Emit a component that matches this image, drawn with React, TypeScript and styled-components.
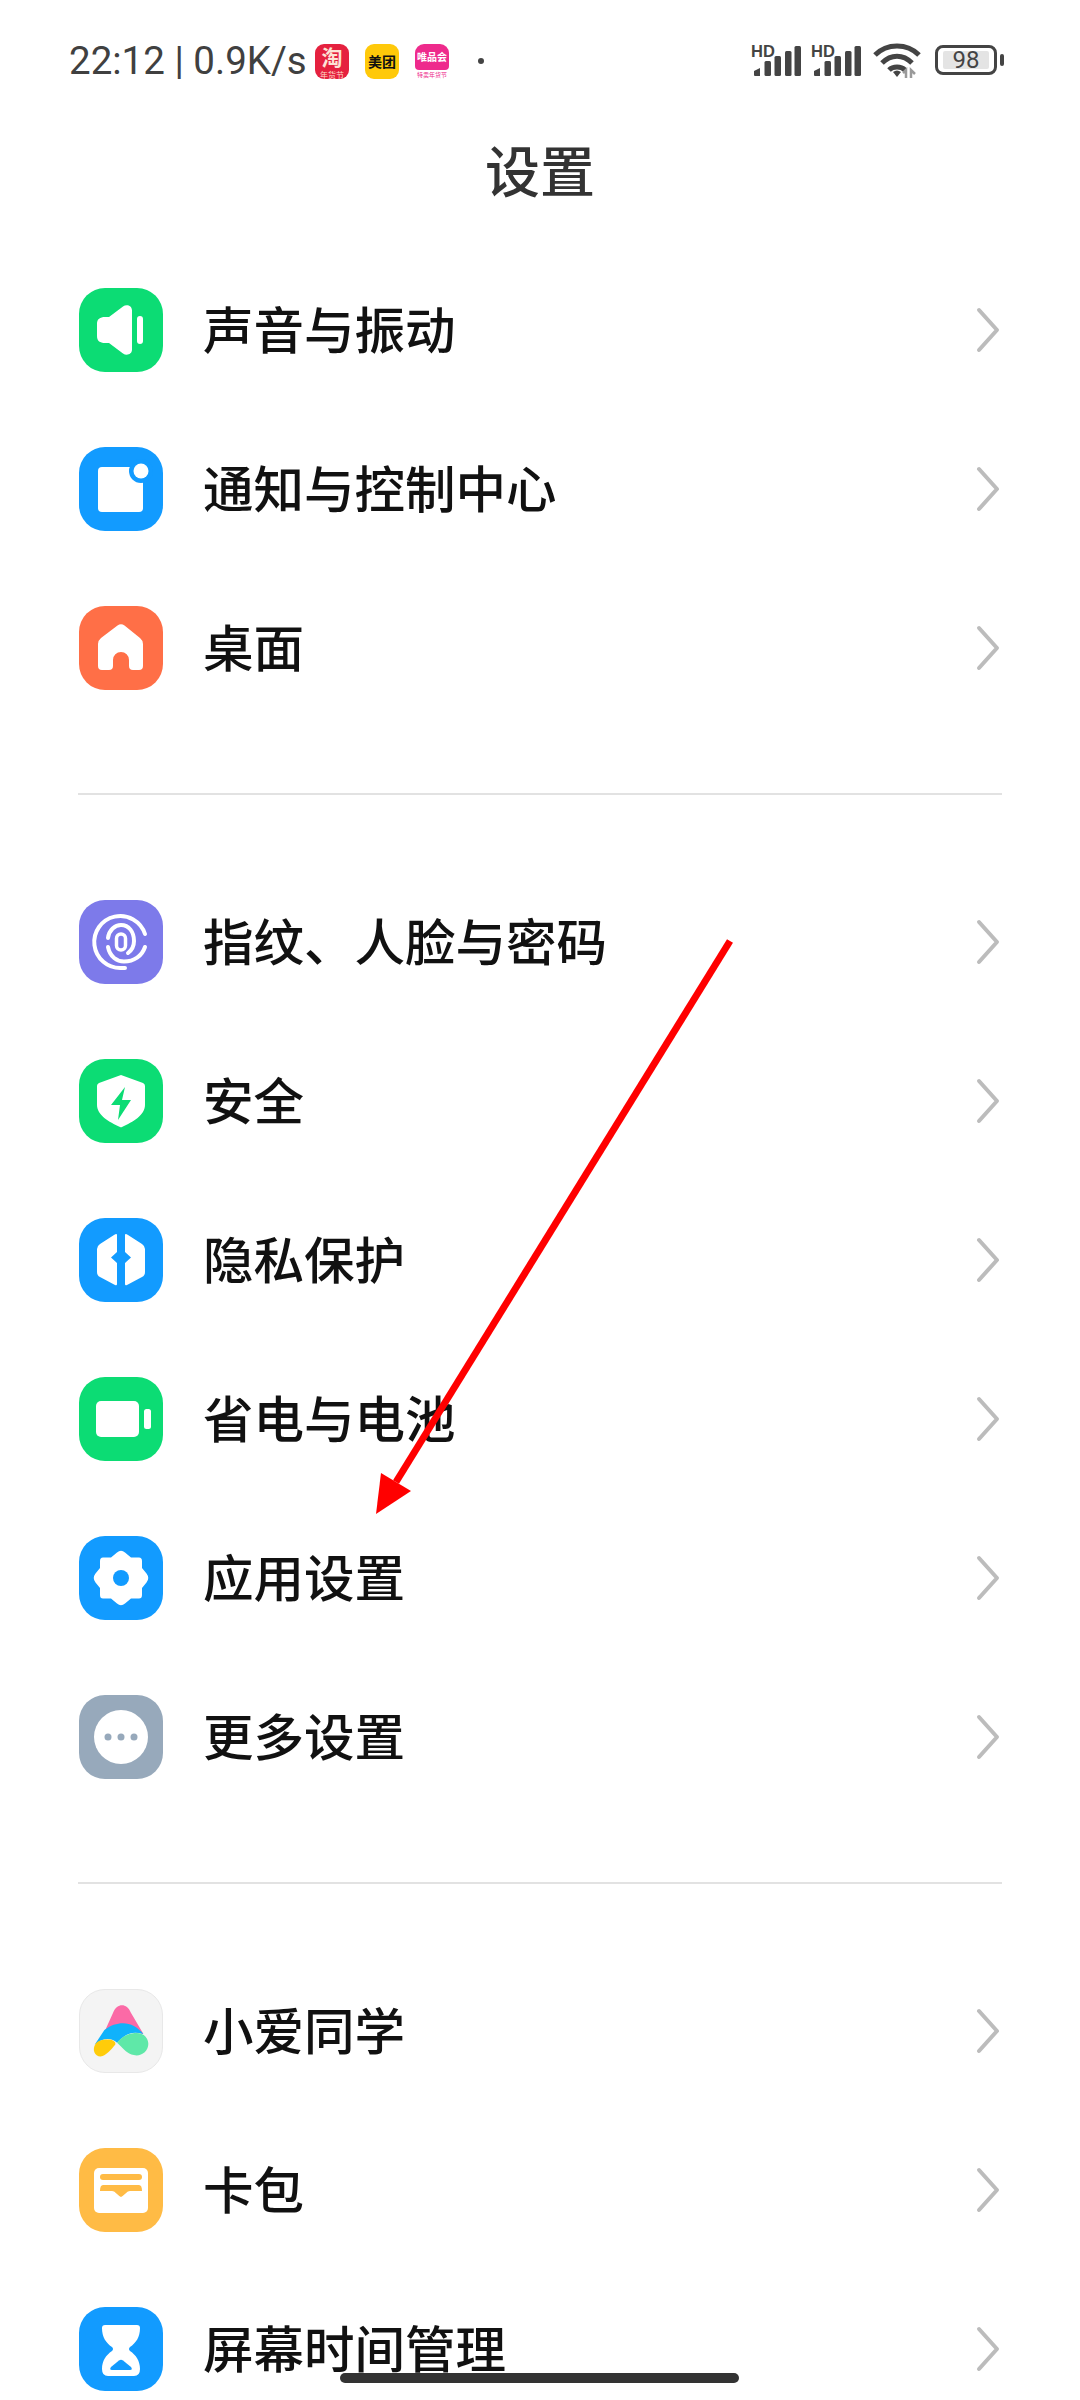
import React from 'react';
import styled, { createGlobalStyle } from 'styled-components';

const FONT = `"Noto Sans CJK SC", "Noto Sans", sans-serif`;

const GlobalStyle = createGlobalStyle`
  html, body { margin: 0; padding: 0; background: #fff; }
  body { font-family: ${FONT}; }
`;

const Page = styled.div`
  position: relative;
  width: 1080px;
  height: 2400px;
  overflow: hidden;
  background: #fff;
`;

const StatusBar = styled.div`
  height: 120px;
  padding: 42px 76px 0 69px;
  box-sizing: border-box;
  display: flex;
  align-items: flex-start;
  justify-content: space-between;
`;

const StatusLeft = styled.div`
  display: flex;
  align-items: center;
  height: 38px;
`;

const StatusText = styled.span`
  font-family: "Roboto", "Noto Sans", sans-serif;
  font-size: 38.5px;
  line-height: 38px;
  color: #404040;
  width: 246px;
  white-space: nowrap;
`;

const AppIcons = styled.div`
  display: flex;
  gap: 16px;
`;

const AppIcon = styled.div<{ $bg: string }>`
  width: 34px;
  height: 35px;
  border-radius: 9px;
  background: ${(p) => p.$bg};
  display: flex;
  flex-direction: column;
  align-items: center;
  justify-content: center;
  line-height: 1;
`;

const AppMain = styled.div<{ $size: number; $color: string; $bg?: string }>`
  width: 100%;
  flex: 1;
  min-height: 0;
  border-radius: 9px 9px 4px 4px;
  display: flex;
  align-items: center;
  justify-content: center;
  font-size: ${(p) => p.$size}px;
  line-height: 1;
  font-weight: 700;
  white-space: nowrap;
  color: ${(p) => p.$color};
  background: ${(p) => p.$bg || 'transparent'};
`;

const AppSub = styled.div<{ $color: string; $size: number }>`
  height: 9px;
  flex: none;
  font-size: ${(p) => p.$size}px;
  line-height: 9px;
  white-space: nowrap;
  color: ${(p) => p.$color};
`;

const Dot = styled.span`
  width: 6px;
  height: 6px;
  margin-left: 29px;
  border-radius: 50%;
  background: #444;
`;

const StatusRight = styled.div`
  display: flex;
  align-items: center;
  height: 36px;
`;

const Signal = styled.svg`
  width: 50px;
  height: 36px;
  margin: -3px 10px 0 0;
`;

const Wifi = styled.svg`
  width: 48px;
  height: 36px;
  margin: 0 14px 0 2px;
`;

const Battery = styled.div`
  position: relative;
  width: 62px;
  height: 30px;
  box-sizing: border-box;
  border: 3px solid #444;
  border-radius: 8px;
  padding: 3px 5px;
  margin-right: 7px;
  &::after {
    content: '';
    position: absolute;
    right: -10px;
    top: 6px;
    width: 4px;
    height: 12px;
    border-radius: 2px;
    background: #444;
  }
`;

const BatteryFill = styled.div`
  height: 18px;
  background: #e4e4e4;
  border-radius: 2px;
  font-family: "Roboto", sans-serif;
  font-size: 24px;
  line-height: 18px;
  text-align: center;
  color: #444;
`;

const Title = styled.h1`
  margin: 0;
  height: 130px;
  font-size: 55px;
  line-height: 96px;
  font-weight: 500;
  text-align: center;
  color: #333;
`;

const Group = styled.div`
  display: flex;
  flex-direction: column;
`;

const Row = styled.div`
  height: 159px;
  padding: 0 78px 0 79px;
  display: flex;
  align-items: center;
`;

const IconBox = styled.div<{ $bg: string; $border?: boolean }>`
  width: 84px;
  height: 84px;
  flex: none;
  border-radius: 26px;
  box-sizing: border-box;
  background: ${(p) => p.$bg};
  border: ${(p) => (p.$border ? '1px solid #e8e8e8' : 'none')};
  overflow: hidden;
  svg { display: block; width: 100%; height: 100%; }
`;

const Label = styled.span`
  flex: 1;
  margin-left: 40px;
  padding-bottom: 5px;
  font-size: 50.5px;
  line-height: 60px;
  font-weight: 500;
  color: #111;
`;

const Chevron = styled.svg`
  width: 26px;
  height: 46px;
  flex: none;
`;

const Divider = styled.div`
  height: 2px;
  margin: 66px 78px 67px;
  background: #e2e2e2;
`;

const HomeBar = styled.div`
  position: absolute;
  left: 340px;
  top: 2373px;
  width: 399px;
  height: 10px;
  border-radius: 5px;
  background: #333;
`;

const Arrow = styled.svg`
  position: absolute;
  left: 0;
  top: 0;
  width: 1080px;
  height: 2400px;
  pointer-events: none;
`;

const BLUE = '#129bff';
const GREEN = '#0cdc74';

const SpeakerIcon = () => (
  <svg viewBox="0 0 84 84">
    <path fill="#fff" d="M26 29h4L44 18.500c3.500-2.500 9-1 9 4v39c0 5-5.500 6.500-9 4L30 55h-4c-5 0-8-2-8-7V36c0-5 3-7 8-7Z" />
    <rect x="58" y="28" width="6" height="28" rx="3" fill="#fff" />
  </svg>
);

const NoticeIcon = () => (
  <svg viewBox="0 0 84 84">
    <rect x="19" y="20" width="45" height="45" rx="4" fill="#fff" />
    <circle cx="62" cy="24" r="12" fill={BLUE} />
    <circle cx="62" cy="24" r="7.500" fill="#fff" />
  </svg>
);

const HomeIcon = () => (
  <svg viewBox="0 0 84 84">
    <path fill="#fff" d="M38.500 19.500Q42 17 45.500 19.500L61 32Q64 34.500 64 38V60Q64 64 60 64H54Q50 64 50 60V54A8 8 0 0 0 34 54V60Q34 64 30 64H23Q19 64 19 60V38Q19 34.500 22 32Z" />
  </svg>
);

const FingerprintIcon = () => (
  <svg viewBox="0 0 84 84" fill="none" stroke="#fff" strokeWidth="4" strokeLinecap="round">
    <path d="M66 34A26 26 0 1 0 42 68H46" />
    <path d="M29 47C31 57 38 61.500 45 61.500C55 61.500 63 56 66 47" />
    <path d="M29 38C30 30 36 25 42 25C50 25 55 32 55 41C55 46 53 50 49 53" />
    <rect x="37.500" y="34" width="9" height="16" rx="4.500" strokeWidth="3.500" />
  </svg>
);

const ShieldIcon = () => (
  <svg viewBox="0 0 84 84">
    <path fill="#fff" d="M42 16L64 24Q66 25 66 27V46C66 56 54 63 43 68Q42 68.500 41 68C30 63 18 56 18 46V27Q18 25 20 24Z" />
    <path fill={GREEN} d="M46 28L32 46H41L39 61L52 41H43Z" />
  </svg>
);

const PrivacyIcon = () => (
  <svg viewBox="0 0 84 84">
    <path fill="#fff" d="M38 17V34L32 39.500L38 45V66Q38 68 36 67L21 59Q18 57.500 18 54V31Q18 28 21 26L35 17Q38 15 38 17Z" />
    <path fill="#fff" d="M46 17V34L52 39.500L46 45V66Q46 68 48 67L63 59Q66 57.500 66 54V31Q66 28 63 26L49 17Q46 15 46 17Z" />
  </svg>
);

const BatteryIcon = () => (
  <svg viewBox="0 0 84 84">
    <rect x="17" y="24" width="43" height="36" rx="5" fill="#fff" />
    <rect x="65" y="32" width="7" height="20" rx="2.500" fill="#fff" />
  </svg>
);

const GearIcon = () => (
  <svg viewBox="0 0 84 84">
    <path fill="#fff" d="M38 16.500Q42 13 46 16.500L52 21.500H60Q63 21.500 63 25V32L67.500 37.500Q71 42 67.500 46.500L63 52V59Q63 62.500 60 62.500H52L46 67.500Q42 71 38 67.500L32 62.500H24Q21 62.500 21 59V52L16.500 46.500Q13 42 16.500 37.500L21 32V25Q21 21.500 24 21.500H32Z" />
    <circle cx="42" cy="42" r="8" fill={BLUE} />
  </svg>
);

const MoreIcon = () => (
  <svg viewBox="0 0 84 84">
    <circle cx="42" cy="42" r="27" fill="#fff" />
    <circle cx="29" cy="42" r="3.500" fill="#97a9bb" />
    <circle cx="42" cy="42" r="3.500" fill="#97a9bb" />
    <circle cx="55" cy="42" r="3.500" fill="#97a9bb" />
  </svg>
);

const AssistantIcon = () => (
  <svg viewBox="0 0 84 84">
    <path fill="#fb6aa6" d="M34 23C38 13 48 13 52 23L65 45L44 40L25 43Z" />
    <path fill="#10b2fb" d="M25 41C31 36 38 34 44 34C52 34 59 38 65 45C55 42 47 44 38 54C33 49 24 48 15 56Z" />
    <path fill="#5fe8a8" d="M38 54C44 46 52 44 58 44C66 44 70 50 70 55C70 62 64 67 58 67C50 67 46 62 42 58Z" />
    <path fill="#ffcc0a" d="M16 55C19 51 26 50 32 51C35 52 37 54 36 56C32 61 27 67 21 68C15 68 12 61 16 55Z" />
  </svg>
);

const WalletIcon = () => (
  <svg viewBox="0 0 84 84">
    <rect x="15" y="20" width="54" height="45" rx="5" fill="#fff" />
    <rect x="21" y="26" width="42" height="6" rx="3" fill="#ffbb45" />
    <path fill="#ffbb45" d="M24 37H60Q63 37 63 43H51C48 43 47 46 42 49C37 46 36 43 33 43H21Q21 37 24 37Z" />
  </svg>
);

const HourglassIcon = () => (
  <svg viewBox="0 0 84 84">
    <path fill="#fff" d="M26 18H58Q61 18 61 21C61 30 57 36 51 40Q49 42 51 44C57 48 61 54 61 62Q61 69 55 69H29Q23 69 23 62C23 54 27 48 33 44Q35 42 33 40C27 36 23 30 23 21Q23 18 26 18Z" />
    <path fill={BLUE} d="M40 53.500Q42 52 44 53.500L52 60Q54 63 51 63H33Q30 63 32 60Z" />
  </svg>
);

const rows1 = [
  { label: '声音与振动', bg: GREEN, icon: <SpeakerIcon /> },
  { label: '通知与控制中心', bg: BLUE, icon: <NoticeIcon /> },
  { label: '桌面', bg: '#ff6f47', icon: <HomeIcon /> },
];

const rows2 = [
  { label: '指纹、人脸与密码', bg: '#7d7aea', icon: <FingerprintIcon /> },
  { label: '安全', bg: GREEN, icon: <ShieldIcon /> },
  { label: '隐私保护', bg: BLUE, icon: <PrivacyIcon /> },
  { label: '省电与电池', bg: GREEN, icon: <BatteryIcon /> },
  { label: '应用设置', bg: BLUE, icon: <GearIcon /> },
  { label: '更多设置', bg: '#97a9bb', icon: <MoreIcon /> },
];

const rows3 = [
  { label: '小爱同学', bg: '#f4f4f4', border: true, icon: <AssistantIcon /> },
  { label: '卡包', bg: '#ffbb45', icon: <WalletIcon /> },
  { label: '屏幕时间管理', bg: BLUE, icon: <HourglassIcon /> },
];

type Item = { label: string; bg: string; border?: boolean; icon: React.ReactNode };

const SettingsGroup = ({ items }: { items: Item[] }) => (
  <Group>
    {items.map((item) => (
      <Row key={item.label}>
        <IconBox $bg={item.bg} $border={item.border}>{item.icon}</IconBox>
        <Label>{item.label}</Label>
        <Chevron viewBox="0 0 26 46" fill="none" stroke="#bcbcbc" strokeWidth="4" strokeLinecap="round" strokeLinejoin="round">
          <path d="M3 3L21 23L3 43" />
        </Chevron>
      </Row>
    ))}
  </Group>
);

const SignalIcon = () => (
  <Signal viewBox="0 -3 50 36" fill="#444">
    <text x="0" y="13" fontFamily="Liberation Sans, sans-serif" fontSize="16.500" fontWeight="700">HD</text>
    <path d="M3 27L9 24V32H4Q3 32 3 31Z" />
    <rect x="13.500" y="17" width="6.500" height="15" rx="1.500" />
    <rect x="23.500" y="12" width="6.500" height="20" rx="1.500" />
    <rect x="34" y="7" width="6.500" height="25" rx="1.500" />
    <rect x="43.500" y="2" width="6.500" height="30" rx="1.500" />
  </Signal>
);

export default function App() {
  return (
    <Page>
      <GlobalStyle />
      <StatusBar>
        <StatusLeft>
          <StatusText>22:12 | 0.9K/s</StatusText>
          <AppIcons>
            <AppIcon $bg="#e5213f">
              <AppMain $size={21} $color="#fde3d6">淘</AppMain>
              <AppSub $size={8} $color="#ffd9c8">年货节</AppSub>
            </AppIcon>
            <AppIcon $bg="#ffc90a">
              <AppMain $size={14} $color="#111">美团</AppMain>
            </AppIcon>
            <AppIcon $bg="#fff">
              <AppMain $size={10} $color="#fff" $bg="#ee2a8c">唯品会</AppMain>
              <AppSub $size={6} $color="#ee2a8c">特卖年货节</AppSub>
            </AppIcon>
          </AppIcons>
          <Dot />
        </StatusLeft>
        <StatusRight>
          <SignalIcon />
          <SignalIcon />
          <Wifi viewBox="0 0 48 36" fill="none" stroke="#444" strokeWidth="5">
            <path d="M2 13C14 1 34 1 46 13" />
            <path d="M9 21C18 12 30 12 39 21" />
            <path d="M16 28C20 24 28 24 32 28" />
            <path d="M20 30L24 35L28 30Q24 27 20 30Z" fill="#444" stroke="none" />
            <path d="M33 36V28L30 31M38 36V28L42 32" stroke="#9a9a9a" strokeWidth="2.500" />
          </Wifi>
          <Battery>
            <BatteryFill>98</BatteryFill>
          </Battery>
        </StatusRight>
      </StatusBar>
      <Title>设置</Title>
      <SettingsGroup items={rows1} />
      <Divider />
      <SettingsGroup items={rows2} />
      <Divider />
      <SettingsGroup items={rows3} />
      <HomeBar />
      <Arrow viewBox="0 0 1080 2400">
        <line x1="730" y1="941" x2="396" y2="1482" stroke="#ff0000" strokeWidth="7" />
        <polygon points="376,1514 381,1473 411,1491" fill="#ff0000" />
      </Arrow>
    </Page>
  );
}
